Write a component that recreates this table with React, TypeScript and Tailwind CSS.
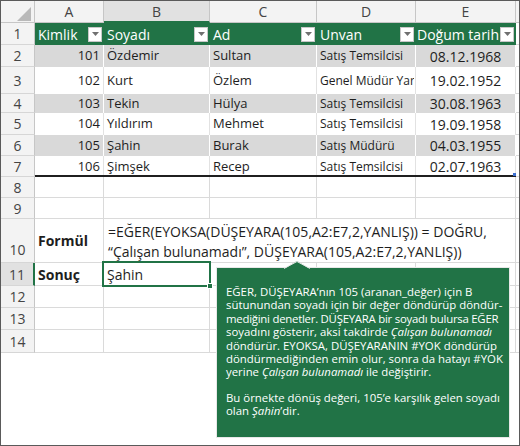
import React from "react";

const FONT = "font-['Open_Sans',sans-serif]";

function FilterBtn() {
  return (
    <span className="ml-auto mr-[2px] flex h-[15px] w-[14px] shrink-0 items-center justify-center border border-[#c8c8c8] bg-white">
      <svg width="7" height="4" viewBox="0 0 7 4">
        <path d="M0 0h7L3.5 4z" fill="#707070" />
      </svg>
    </span>
  );
}

function RowHead({ n, h, active }: { n: string; h: string; active?: boolean }) {
  return (
    <div
      className={`${h} w-[34px] shrink-0 flex items-center justify-center text-[14px] text-[#444] border-b border-b-[#d6d6d6] ${
        active ? "bg-[#e1e1e1] border-r-2 border-r-[#217346]" : "bg-[#f3f3f3] border-r border-r-[#c6c6c6]"
      }`}
    >
      {n}
    </div>
  );
}

type Row = { id: string; last: string; first: string; title: string; date: string };

const rows: (Row & { h: string; band: boolean })[] = [
  { id: "101", last: "Özdemir", first: "Sultan", title: "Satış Temsilcisi", date: "08.12.1968", h: "h-[22px]", band: true },
  { id: "102", last: "Kurt", first: "Özlem", title: "Genel Müdür Yardımcısı", date: "19.02.1952", h: "h-[27px]", band: false },
  { id: "103", last: "Tekin", first: "Hülya", title: "Satış Temsilcisi", date: "30.08.1963", h: "h-[19px]", band: true },
  { id: "104", last: "Yıldırım", first: "Mehmet", title: "Satış Temsilcisi", date: "19.09.1958", h: "h-[22px]", band: false },
  { id: "105", last: "Şahin", first: "Burak", title: "Satış Müdürü", date: "04.03.1955", h: "h-[21px]", band: true },
  { id: "106", last: "Şimşek", first: "Recep", title: "Satış Temsilcisi", date: "02.07.1963", h: "h-[21px]", band: false },
];

function EmptyRow({ n, h }: { n: string; h: string }) {
  const c = "border-r border-b border-[#dadada]";
  return (
    <div className={`flex ${h}`}>
      <RowHead n={n} h={h} />
      <div className={`w-[69px] ${c}`} />
      <div className={`w-[106px] ${c}`} />
      <div className={`w-[107px] ${c}`} />
      <div className={`w-[99px] ${c}`} />
      <div className={`w-[100px] ${c}`} />
      <div className="flex-1 border-b border-[#dadada]" />
    </div>
  );
}

export default function App() {
  return (
    <div className={`relative w-[520px] h-[446px] overflow-hidden bg-white border border-[#5a5a5a] ${FONT} text-[#1e1e1e]`}>
      {/* column header */}
      <div className="flex h-[22px]">
        <div className="relative w-[34px] shrink-0 bg-[#f3f3f3] border-r border-b border-[#c6c6c6]">
          <svg className="absolute left-[16px] top-[6px]" width="14" height="14" viewBox="0 0 14 14">
            <path d="M14 0V14H0z" fill="#b9b9b9" />
          </svg>
        </div>
        <div className="w-[69px] bg-[#f3f3f3] border-r border-b border-[#c6c6c6] flex items-center justify-center text-[14px] text-[#444]">A</div>
        <div className="w-[106px] bg-[#e1e1e1] border-r border-r-[#c6c6c6] border-b-2 border-b-[#217346] flex items-center justify-center text-[14px] text-[#444]">B</div>
        <div className="w-[107px] bg-[#f3f3f3] border-r border-b border-[#c6c6c6] flex items-center justify-center text-[14px] text-[#444]">C</div>
        <div className="w-[99px] bg-[#f3f3f3] border-r border-b border-[#c6c6c6] flex items-center justify-center text-[14px] text-[#444]">D</div>
        <div className="w-[100px] bg-[#f3f3f3] border-r border-b border-[#c6c6c6] flex items-center justify-center text-[14px] text-[#444]">E</div>
        <div className="flex-1 bg-[#f3f3f3] border-b border-[#c6c6c6]" />
      </div>

      {/* row 1: table header */}
      <div className="flex h-[22px]">
        <RowHead n="1" h="h-[22px]" />
        <div className="w-[69px] bg-[#217346] flex items-center pl-[3px] text-[14px] text-white whitespace-nowrap">
          Kimlik<FilterBtn />
        </div>
        <div className="w-[106px] bg-[#217346] flex items-center pl-[3px] text-[14px] text-white whitespace-nowrap">
          Soyadı<FilterBtn />
        </div>
        <div className="w-[107px] bg-[#217346] flex items-center pl-[3px] text-[14px] text-white whitespace-nowrap">
          Ad<FilterBtn />
        </div>
        <div className="w-[99px] bg-[#217346] flex items-center pl-[3px] text-[14px] text-white whitespace-nowrap">
          Unvan<FilterBtn />
        </div>
        <div className="w-[100px] bg-[#217346] flex items-center pl-[1px] text-[14px] text-white whitespace-nowrap overflow-hidden">
          Doğum tarih<FilterBtn />
        </div>
        <div className="flex-1 border-b border-[#dadada]" />
      </div>

      {/* data rows */}
      {rows.map((r, i) => {
        const bg = r.band ? "bg-[#d9d9d9] border-r border-r-white" : "bg-white border-r border-r-[#e2e2e2]";
        return (
          <div key={r.id} className={`relative flex ${r.h}`}>
            <RowHead n={String(i + 2)} h={r.h} />
            <div className={`w-[69px] ${bg} flex items-center justify-end pr-[3px] text-[13px]`}>{r.id}</div>
            <div className={`w-[106px] ${bg} flex items-center pl-[3px] text-[13px]`}>{r.last}</div>
            <div className={`w-[107px] ${bg} flex items-center pl-[3px] text-[13px]`}>{r.first}</div>
            <div className={`w-[99px] ${bg} flex items-center pl-[3px] text-[12px] whitespace-nowrap overflow-hidden`}>
              <span className="block max-w-[94px] overflow-hidden">{r.title}</span>
            </div>
            <div className={`w-[100px] ${bg} flex items-center justify-center text-[14px]`}>{r.date}</div>
            <div className="flex-1 border-b border-[#dadada]" />
            {i === 5 && (
              <>
                <div className="absolute left-[34px] bottom-0 w-[481px] h-[2px] bg-[#1f1f1f]" />
                <div className="absolute left-[512px] bottom-[1px] w-[3px] h-[3px] bg-[#3b6fd1]" />
              </>
            )}
          </div>
        );
      })}

      <EmptyRow n="8" h="h-[21px]" />
      <EmptyRow n="9" h="h-[21px]" />

      {/* row 10 */}
      <div className="flex h-[44px]">
        <div className="h-[44px] w-[34px] shrink-0 flex items-end justify-center pb-[2px] text-[14px] text-[#444] bg-[#f3f3f3] border-r border-r-[#c6c6c6] border-b border-b-[#d6d6d6]">
          10
        </div>
        <div className="w-[69px] border-r border-b border-[#dadada] flex items-center pl-[3px] text-[14px] font-bold">Formül</div>
        <div className="w-[412px] border-r border-b border-[#dadada] flex flex-col justify-end pl-[4px] text-[14px] leading-[20px] whitespace-nowrap">
          <span>=EĞER(EYOKSA(DÜŞEYARA(105,A2:E7,2,YANLIŞ)) = DOĞRU,</span>
          <span>“Çalışan bulunamadı”, DÜŞEYARA(105,A2:E7,2,YANLIŞ))</span>
        </div>
        <div className="flex-1 border-b border-[#dadada]" />
      </div>

      {/* row 11 */}
      <div className="relative flex h-[23px]">
        <RowHead n="11" h="h-[23px]" active />
        <div className="w-[69px] border-r border-b border-[#dadada] flex items-center pl-[3px] text-[14px] font-bold">Sonuç</div>
        <div className="w-[106px] border-r border-b border-[#dadada] flex items-center pl-[3px] text-[14px]">Şahin</div>
        <div className="w-[107px] border-r border-b border-[#dadada]" />
        <div className="w-[99px] border-r border-b border-[#dadada]" />
        <div className="w-[100px] border-r border-b border-[#dadada]" />
        <div className="flex-1 border-b border-[#dadada]" />
        <div className="absolute left-[101px] top-[-2px] w-[109px] h-[26px] border-2 border-[#217346]" />
        <div className="absolute left-[206px] top-[20px] w-[6px] h-[6px] bg-[#217346] border border-white" />
      </div>

      <EmptyRow n="12" h="h-[22px]" />
      <EmptyRow n="13" h="h-[22px]" />
      <EmptyRow n="14" h="h-[23px]" />

      {/* callout */}
      <div className="absolute left-[215px] top-[266px] w-[294px] h-[171px] bg-[#217346] border border-[#e8e8e8] pl-[9px] pt-[17px] text-white text-[11.4px] leading-[13.4px] whitespace-nowrap">
        <p>
          EĞER, DÜŞEYARA’nın 105 (aranan_değer) için B<br />
          sütunundan soyadı için bir değer döndürüp döndür-<br />
          <span className="tracking-[-0.25px]">mediğini denetler. DÜŞEYARA bir soyadı bulursa EĞER</span><br />
          soyadını gösterir, aksi takdirde <i>Çalışan bulunamadı</i><br />
          döndürür. EYOKSA, DÜŞEYARANIN #YOK döndürüp<br />
          döndürmediğinden emin olur, sonra da hatayı #YOK<br />
          yerine <i>Çalışan bulunamadı</i> ile değiştirir.
        </p>
        <p className="mt-[12px]">
          Bu örnekte dönüş değeri, 105’e karşılık gelen soyadı<br />
          olan <i>Şahin</i>’dir.
        </p>
      </div>
      <svg className="absolute left-[283px] top-[260px]" width="26" height="8" viewBox="0 0 26 8">
        <path d="M0 8L13 0L26 8z" fill="#217346" />
        <path d="M0 7.5L13 0.5L26 7.5" fill="none" stroke="#e8e8e8" strokeWidth="1" />
      </svg>
    </div>
  );
}
